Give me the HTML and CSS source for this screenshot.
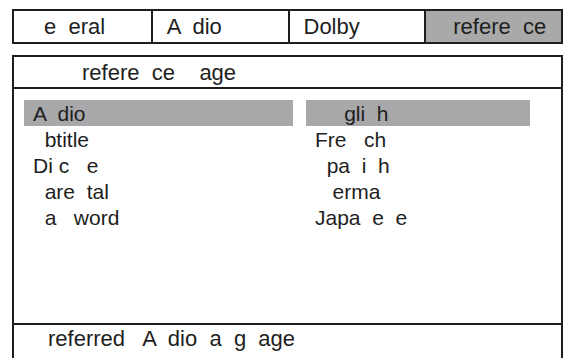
FILE: index.html
```html
<!DOCTYPE html>
<html>
<head>
<meta charset="utf-8">
<link rel="stylesheet" href="styles.css">
</head>
<body>
<div class="tabs">
  <div class="tab tab-general">e  eral</div>
  <div class="tab">A  dio</div>
  <div class="tab">Dolby</div>
  <div class="tab tab-pref active">refere  ce</div>
</div>
<div class="panel">
  <div class="panel-head">refere  ce    age</div>
  <div class="lists">
    <ul class="list list-left">
      <li class="sel">A  dio</li>
      <li>  btitle</li>
      <li>Di c   e</li>
      <li>  are  tal</li>
      <li>  a   word</li>
    </ul>
    <ul class="list list-right">
      <li class="sel">     gli  h</li>
      <li>Fre   ch</li>
      <li>  pa  i  h</li>
      <li>   erma</li>
      <li>Japa  e  e</li>
    </ul>
  </div>
  <div class="panel-foot">referred   A  dio  a  g  age</div>
</div>
</body>
</html>
```

FILE: styles.css
```css
html, body {
  margin: 0;
  padding: 0;
  background: #ffffff;
}
body {
  font-family: "Liberation Sans", Arial, sans-serif;
  font-size: 21px;
  color: #1e1e1e;
  padding: 9px 0 0 12px;
  width: 551px;
}
.tabs {
  display: grid;
  grid-template-columns: repeat(4, minmax(0, 1fr));
  border: 2px solid #1e1e1e;
  height: 31px;
}
.tab {
  white-space: pre;
  font-size: 22px;
  line-height: 32px;
  padding-left: 14px;
  overflow: hidden;
}
.tab + .tab {
  border-left: 2px solid #1e1e1e;
}
.tab-general {
  padding-left: 30px;
}
.tab-pref {
  padding-left: 27px;
}
.tab.active {
  background: #a9a9aa;
}
.panel {
  margin-top: 11px;
  border: 2px solid #1e1e1e;
}
.panel-head {
  height: 30px;
  font-size: 22px;
  line-height: 31px;
  white-space: pre;
  padding-left: 68px;
  border-bottom: 2px solid #1e1e1e;
}
.lists {
  display: flex;
  gap: 13px;
  padding: 11px 0 0 10px;
  box-sizing: border-box;
  height: 234px;
}
.list {
  list-style: none;
  margin: 0;
  padding: 0;
}
.list-left { width: 269px; }
.list-right { width: 224px; }
.list li {
  height: 26px;
  box-sizing: border-box;
  padding: 2px 0 0 9px;
  line-height: 24px;
  white-space: pre;
}
.list li.sel {
  background: #a8a8aa;
}
.panel-foot {
  border-top: 2px solid #1e1e1e;
  padding: 2px 0 0 34px;
  font-size: 22px;
  line-height: 24px;
  height: 40px;
  white-space: pre;
}
```
